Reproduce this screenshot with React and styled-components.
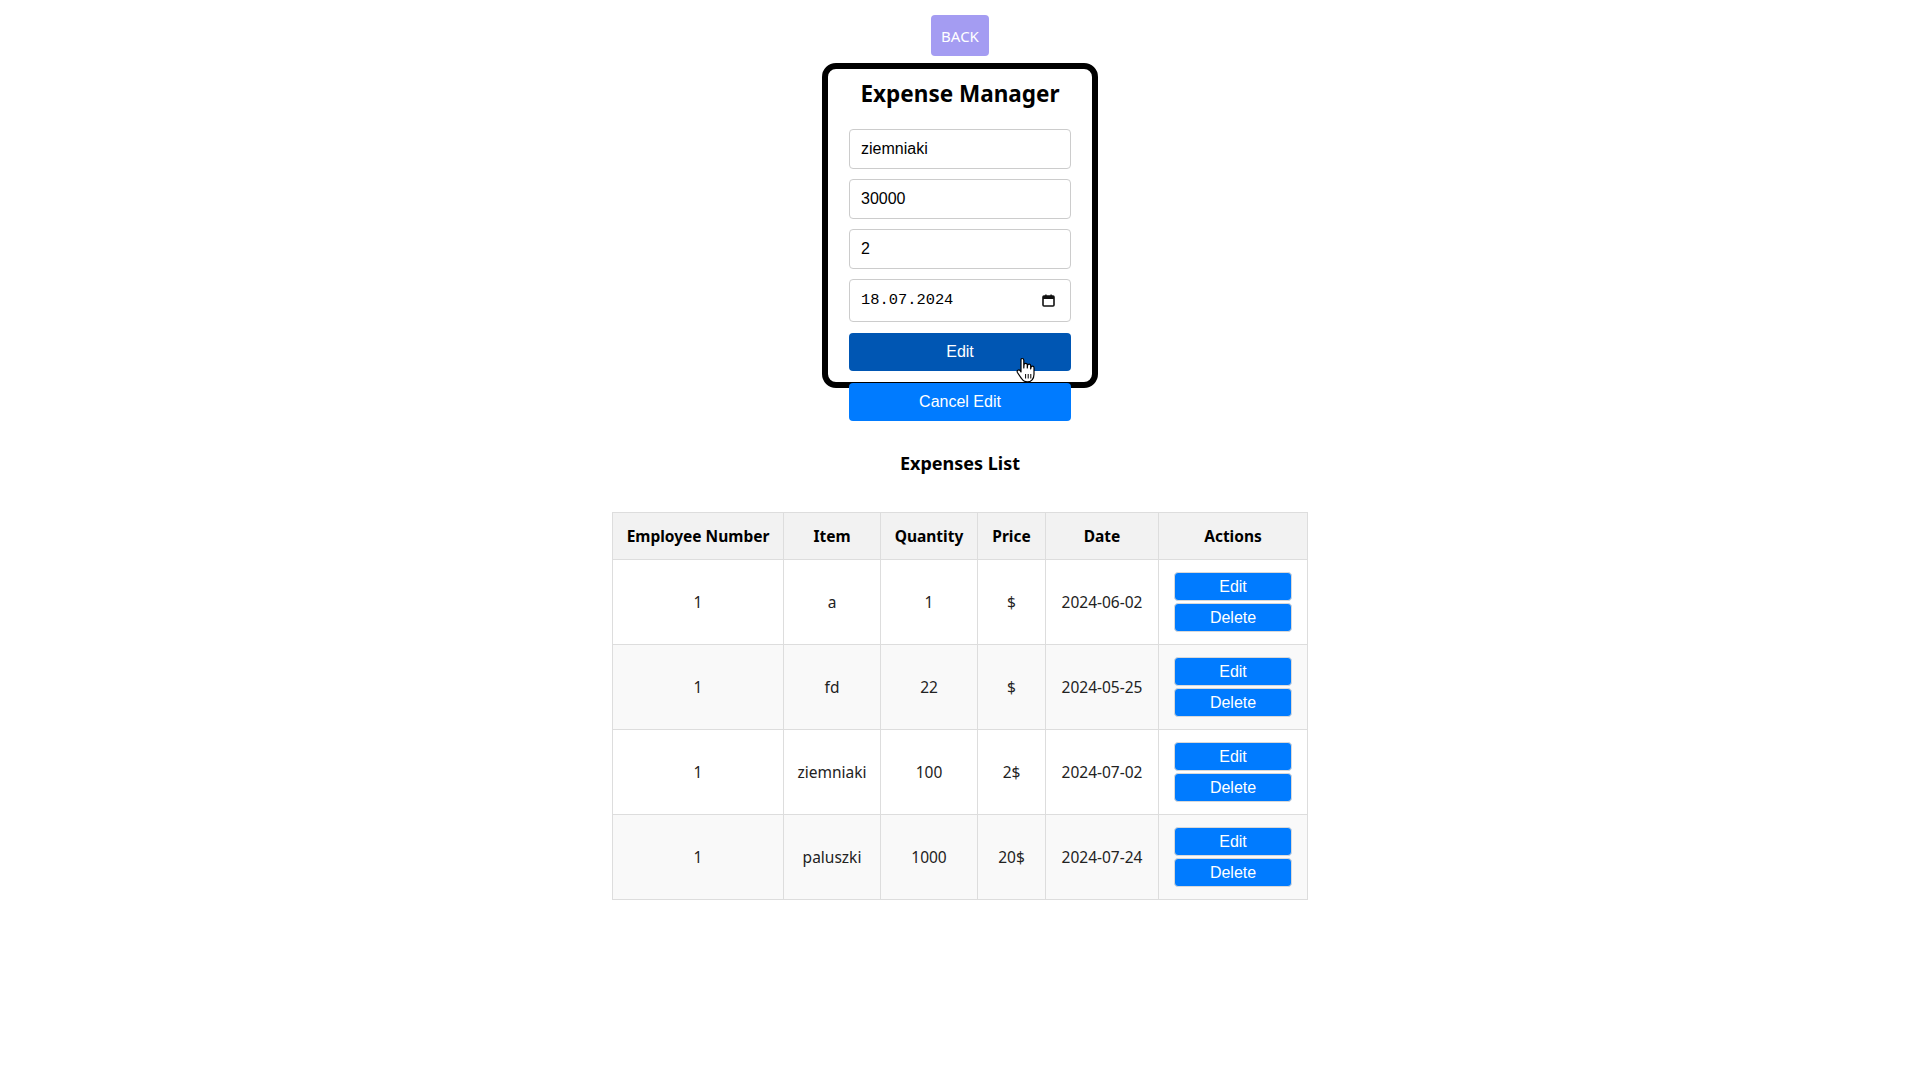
import React from "react";
import styled, { createGlobalStyle } from "styled-components";

const GlobalStyle = createGlobalStyle`
  body {
    margin: 0;
    background: #ffffff;
    font-family: "Noto Sans", "Open Sans", sans-serif;
    color: #000;
  }
`;

const expenses = [
  { id: 1, employee: 1, item: "a", quantity: 1, price: "$", date: "2024-06-02" },
  { id: 2, employee: 1, item: "fd", quantity: 22, price: "$", date: "2024-05-25" },
  { id: 3, employee: 1, item: "ziemniaki", quantity: 100, price: "2$", date: "2024-07-02" },
  { id: 4, employee: 1, item: "paluszki", quantity: 1000, price: "20$", date: "2024-07-24" },
];

const columns = [
  { label: "Employee Number", width: 171 },
  { label: "Item", width: 97 },
  { label: "Quantity", width: 97 },
  { label: "Price", width: 68 },
  { label: "Date", width: 113 },
  { label: "Actions", width: 149 },
];

const CalendarIcon = () => (
  <svg width="13" height="13" viewBox="0 0 13 13">
    <rect x="1" y="2" width="11" height="10" rx="1" fill="none" stroke="#111" strokeWidth="1.6" />
    <rect x="1" y="2" width="11" height="3" fill="#111" />
    <rect x="3.2" y="0.5" width="1.4" height="2.5" fill="#111" />
    <rect x="8.4" y="0.5" width="1.4" height="2.5" fill="#111" />
  </svg>
);

const HandCursor = () => (
  <svg width="20" height="27" viewBox="0 0 20 27">
    <path
      d="M6 1.5c1 0 1.8.8 1.8 1.8V11l.2-3.2c.1-.9.8-1.5 1.7-1.5s1.6.7 1.6 1.6V11l.2-2.4c.1-.9.8-1.5 1.6-1.5.9 0 1.6.7 1.6 1.6V12l.3-1.6c.1-.8.8-1.3 1.5-1.3.9 0 1.5.7 1.5 1.6v6.6c0 4.6-2.8 7.6-6.6 7.6-3 0-4.6-1.3-6-3.6L1.4 15.5c-.5-.8-.3-1.8.5-2.3.8-.5 1.7-.3 2.3.4l.8 1.3V3.3C5 2.3 5.1 1.5 6 1.5z"
      fill="#fff"
      stroke="#000"
      strokeWidth="1.2"
      strokeLinejoin="round"
    />
    <path d="M9.6 17v4.5M12.2 17v4.5M14.8 17v4.5" stroke="#000" strokeWidth="1" />
  </svg>
);

const App = () => {
  return (
    <Page>
      <GlobalStyle />
      <BackButton>BACK</BackButton>
      <Card>
        <Title>Expense Manager</Title>
        <Form>
          <Input type="text" defaultValue="ziemniaki" />
          <Input type="text" defaultValue="30000" />
          <Input type="text" defaultValue="2" />
          <DateField>
            <DateText>18.07.2024</DateText>
            <CalendarIcon />
          </DateField>
          <SubmitWrap>
            <FormButton $active>Edit</FormButton>
            <Cursor>
              <HandCursor />
            </Cursor>
          </SubmitWrap>
          <FormButton>Cancel Edit</FormButton>
        </Form>
      </Card>

      <ListTitle>Expenses List</ListTitle>
      <Table>
        <colgroup>
          {columns.map((c) => (
            <col key={c.label} style={{ width: c.width }} />
          ))}
        </colgroup>
        <thead>
          <tr>
            {columns.map((c) => (
              <Th key={c.label}>{c.label}</Th>
            ))}
          </tr>
        </thead>
        <tbody>
          {expenses.map((e) => (
            <Row key={e.id}>
              <Td>{e.employee}</Td>
              <Td>{e.item}</Td>
              <Td>{e.quantity}</Td>
              <Td>{e.price}</Td>
              <Td>{e.date}</Td>
              <ActionCell>
                <ActionButton>Edit</ActionButton>
                <ActionButton>Delete</ActionButton>
              </ActionCell>
            </Row>
          ))}
        </tbody>
      </Table>
    </Page>
  );
};

const Page = styled.div`
  display: flex;
  flex-direction: column;
  align-items: center;
  padding-top: 15px;
  padding-bottom: 40px;
`;

const BackButton = styled.button`
  width: 58px;
  height: 41px;
  border: none;
  border-radius: 4px;
  background: #a49cf2;
  color: #fff;
  font-family: "Noto Sans", sans-serif;
  font-size: 15px;
  padding: 0;
  margin-bottom: 7px;
  cursor: pointer;
`;

const Card = styled.div`
  box-sizing: border-box;
  width: 276px;
  height: 325px;
  border: 6px solid #000;
  border-radius: 14px;
  padding: 0 21px;
  background: #fff;
`;

const Title = styled.h2`
  margin: 8.5px 0 19px;
  text-align: center;
  font-size: 22.5px;
  line-height: 32px;
  font-weight: 700;
`;

const Form = styled.div`
  display: flex;
  flex-direction: column;
`;

const Input = styled.input`
  box-sizing: border-box;
  width: 100%;
  height: 40px;
  margin-bottom: 10px;
  padding: 0 11px;
  border: 1px solid #ccc;
  border-radius: 4px;
  font-family: "Liberation Sans", Arial, sans-serif;
  font-size: 16px;
  color: #000;
  outline: none;
`;

const DateField = styled.div`
  box-sizing: border-box;
  display: flex;
  align-items: center;
  justify-content: space-between;
  height: 43px;
  margin-bottom: 11px;
  padding: 0 15px 0 11px;
  border: 1px solid #ccc;
  border-radius: 4px;
`;

const DateText = styled.span`
  font-family: "Liberation Mono", "DejaVu Sans Mono", monospace;
  font-size: 15.4px;
  color: #000;
`;

const SubmitWrap = styled.div`
  position: relative;
  margin-bottom: 12px;
  display: flex;
  flex-direction: column;
`;

const FormButton = styled.button`
  box-sizing: border-box;
  width: 100%;
  height: 38px;
  border: none;
  border-radius: 4px;
  background: ${(p) => (p.$active ? "#0056b3" : "#007bff")};
  color: #fff;
  font-family: "Liberation Sans", Arial, sans-serif;
  font-size: 16px;
  cursor: pointer;
`;

const Cursor = styled.div`
  position: absolute;
  left: 167px;
  top: 24px;
  pointer-events: none;
`;

const ListTitle = styled.h3`
  margin: 63px 0 37px;
  font-size: 18px;
  line-height: 24px;
  font-weight: 700;
  text-align: center;
`;

const Table = styled.table`
  border-collapse: collapse;
  table-layout: fixed;
  width: 695px;
  font-family: "Noto Sans", sans-serif;
  font-size: 15.5px;
`;

const Th = styled.th`
  height: 46px;
  padding: 0 8px;
  background: #f2f2f2;
  border: 1px solid #ddd;
  font-weight: 700;
  text-align: center;
  color: #000;
`;

const Row = styled.tr`
  background: #fff;
  &:nth-child(even) {
    background: #f9f9f9;
  }
`;

const Td = styled.td`
  height: 85px;
  box-sizing: border-box;
  padding: 0 8px;
  border: 1px solid #ddd;
  text-align: center;
  color: #222;
`;

const ActionCell = styled(Td)`
  padding: 0 15px;
`;

const ActionButton = styled.button`
  display: block;
  box-sizing: border-box;
  width: 100%;
  height: 29px;
  margin: 2px 0;
  border: 1px solid #d9d9d9;
  border-radius: 4px;
  background: #007bff;
  color: #fff;
  font-family: "Liberation Sans", Arial, sans-serif;
  font-size: 16px;
  cursor: pointer;
`;

export default App;
